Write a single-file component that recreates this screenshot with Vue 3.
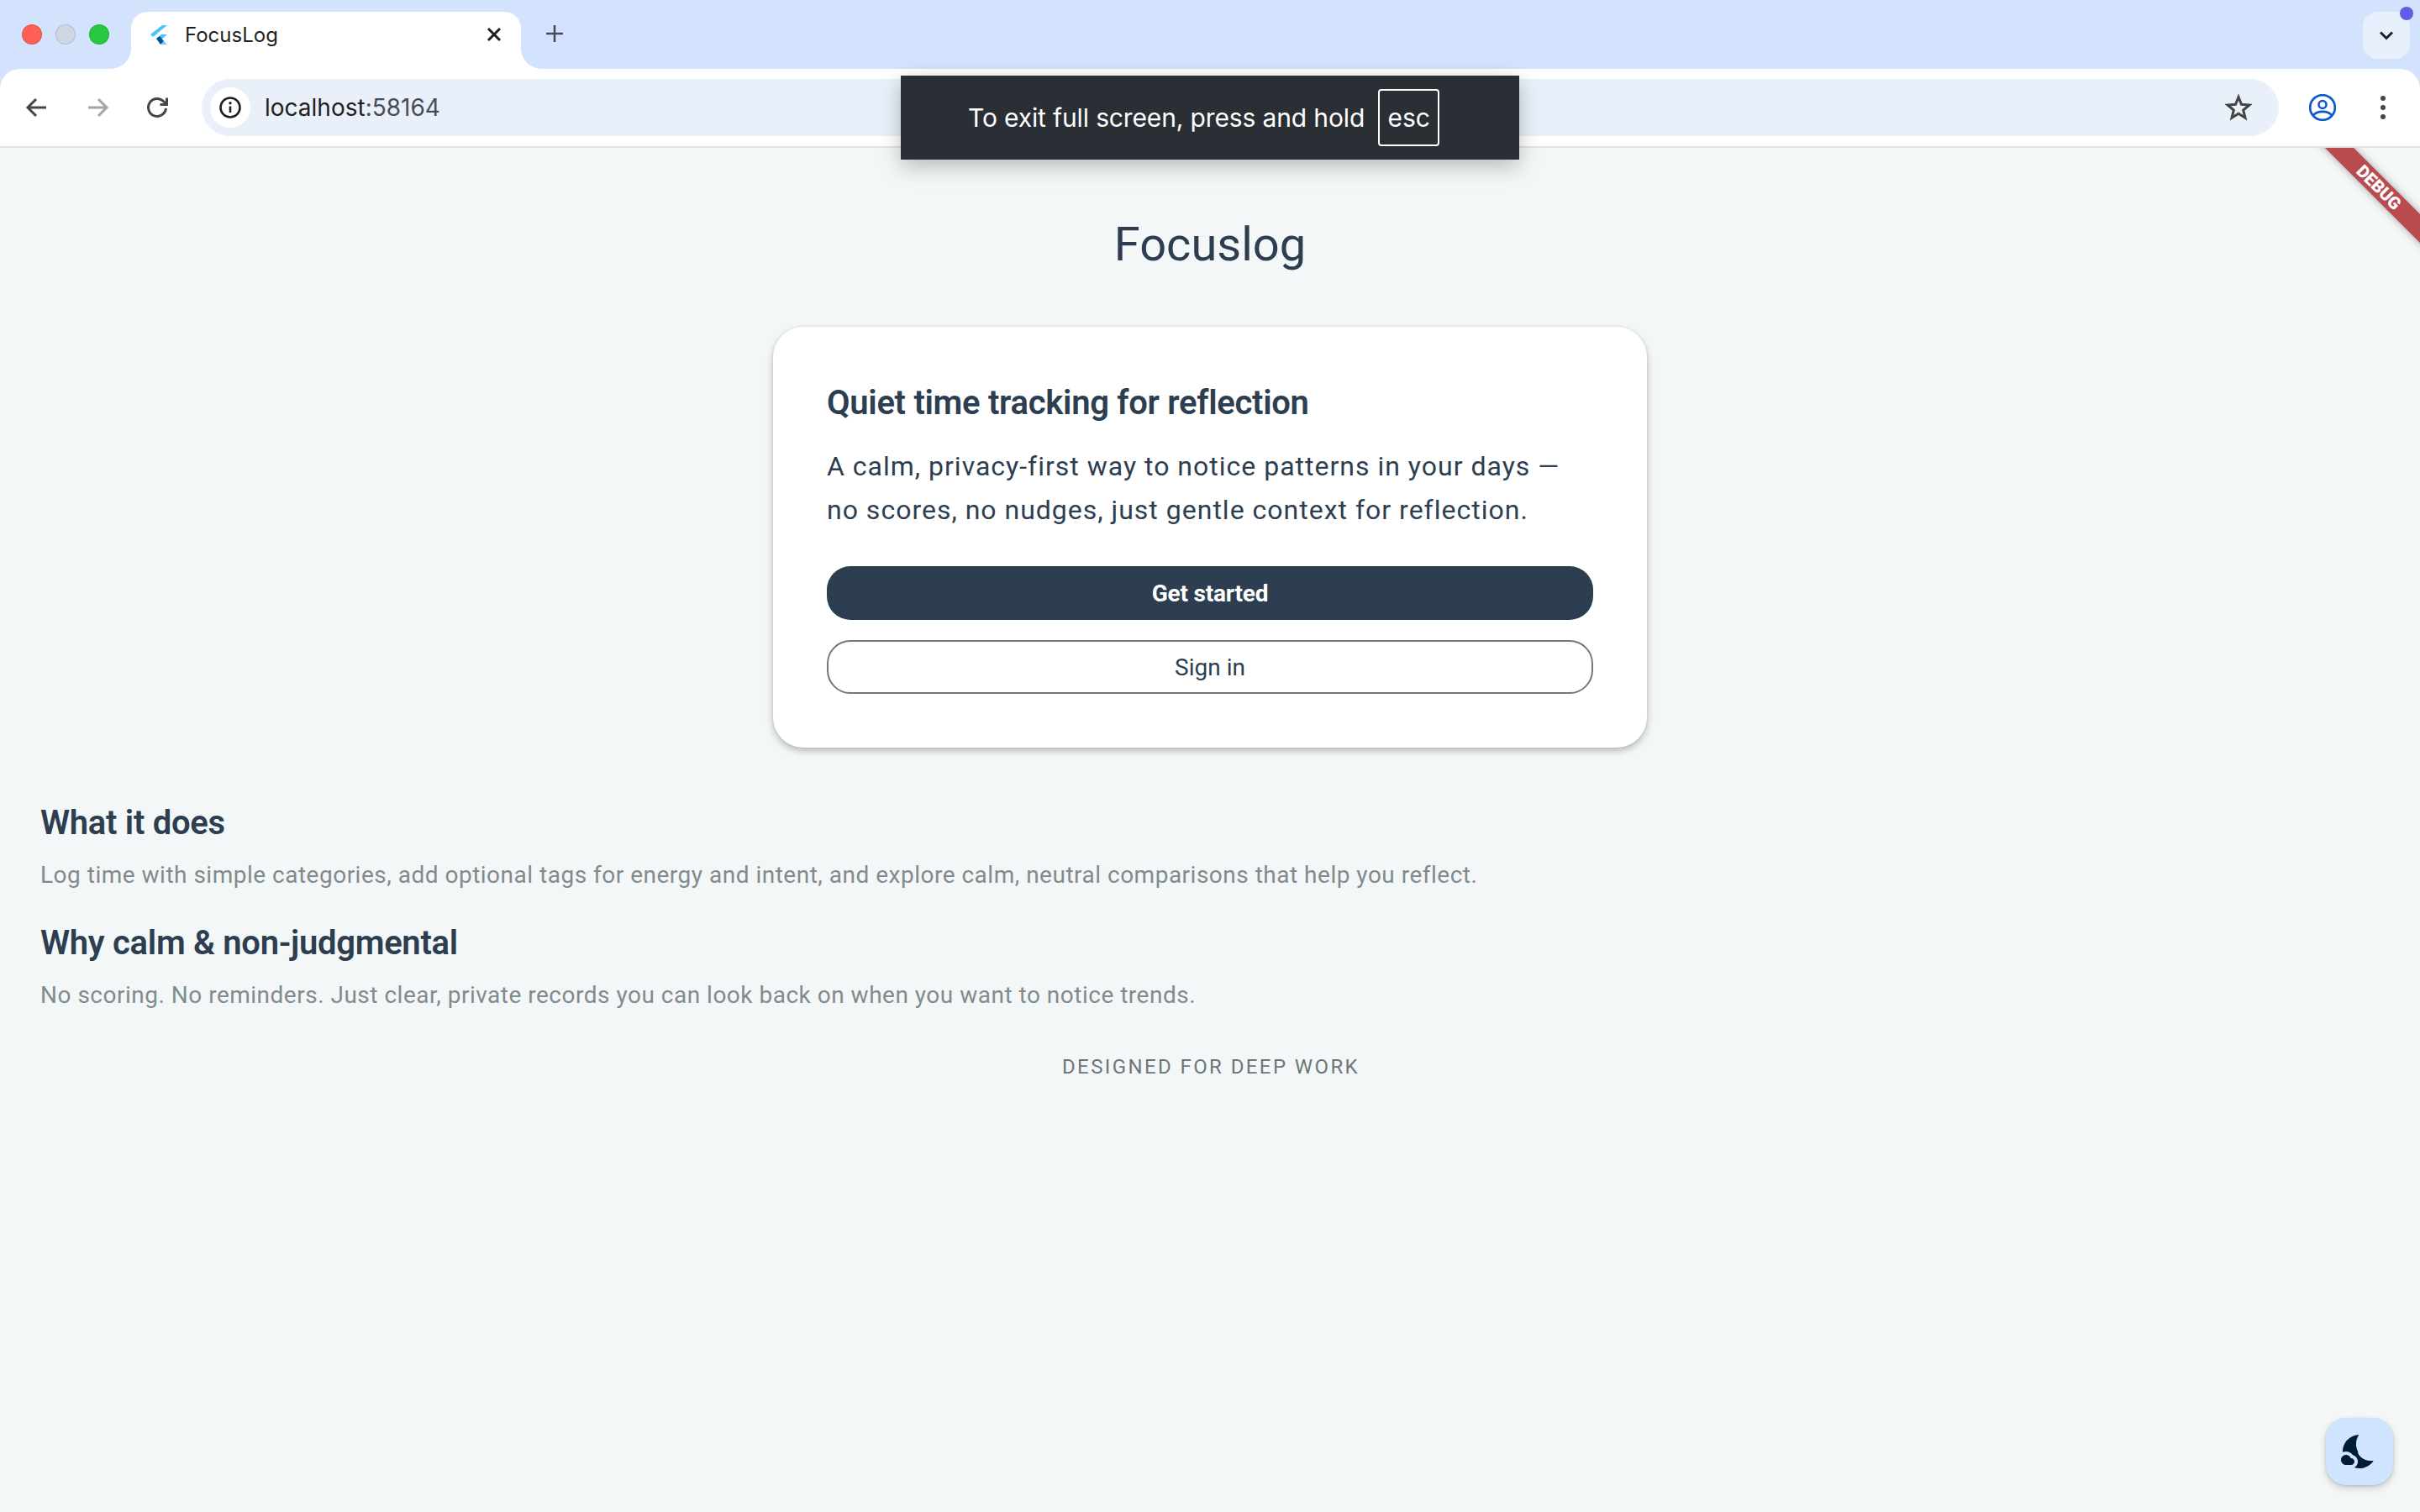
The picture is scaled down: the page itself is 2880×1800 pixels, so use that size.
<script setup>
const sections = [
  {
    title: 'What it does',
    text: 'Log time with simple categories, add optional tags for energy and intent, and explore calm, neutral comparisons that help you reflect.'
  },
  {
    title: 'Why calm & non-judgmental',
    text: 'No scoring. No reminders. Just clear, private records you can look back on when you want to notice trends.'
  }
];
</script>

<template>
  <div class="window">
    <header class="chrome">
      <div class="tabstrip">
        <div class="lights">
          <span class="light red"></span>
          <span class="light grey"></span>
          <span class="light green"></span>
        </div>
        <div class="tab">
          <svg class="favicon" viewBox="0 0 24 24">
            <polygon points="15,1 21,1 4,15 1,12" fill="#47c5fb" />
            <polygon points="14,12 21,12 12,20 8,17" fill="#47c5fb" />
            <polygon points="8,17 12,14 17,20 13,24" fill="#00569e" />
            <polygon points="13,24 17,20 21,24" fill="#00b5f8" opacity="0.6" />
          </svg>
          <span class="tab-title">FocusLog</span>
          <svg class="tab-close" viewBox="0 0 24 24">
            <path d="M5 5 19 19M19 5 5 19" />
          </svg>
        </div>
        <svg class="new-tab" viewBox="0 0 24 24">
          <path d="M12 2V22M2 12H22" />
        </svg>
        <div class="tab-menu">
          <svg viewBox="0 0 24 24">
            <path d="M5 8.500 12 15.500 19 8.500" />
          </svg>
          <span class="menu-dot"></span>
        </div>
      </div>

      <div class="toolbar">
        <svg class="nav-icon" viewBox="0 0 32 32">
          <path d="M27 16H6M15 6 5 16 15 26" stroke="#474747" />
        </svg>
        <svg class="nav-icon" viewBox="0 0 32 32">
          <path d="M5 16H26M17 6 27 16 17 26" stroke="#a6a6a6" />
        </svg>
        <svg class="nav-icon" viewBox="0 0 32 32">
          <path d="M25.500 17A10.500 10.500 0 1 1 22.500 8.500L26 12" stroke="#474747" />
          <path d="M26.500 4.500V12.500H18.500" stroke="#474747" />
        </svg>
        <div class="omnibox">
          <div class="site-info">
            <svg viewBox="0 0 28 28">
              <circle cx="14" cy="14" r="11.500" fill="none" stroke="#1f1f1f" stroke-width="2.600" />
              <path d="M14 12.500V20" stroke="#1f1f1f" stroke-width="2.600" />
              <circle cx="14" cy="8.800" r="1.700" fill="#1f1f1f" />
            </svg>
          </div>
          <span class="url">localhost<span class="port">:58164</span></span>
          <svg class="star" viewBox="0 0 32 32">
            <path d="M16 3.500 19.500 12.300 29 13 21.700 19 24 28.300 16 23.200 8 28.300 10.300 19 3 13 12.500 12.300Z" />
          </svg>
        </div>
        <svg class="profile" viewBox="0 0 32 32">
          <circle cx="16" cy="16" r="14.800" />
          <circle cx="16" cy="12.500" r="4.500" />
          <path d="M5.500 25C9 19.500 23 19.500 26.500 25" />
        </svg>
        <div class="kebab">
          <span></span>
          <span></span>
          <span></span>
        </div>
      </div>
    </header>

    <main class="page">
      <h1 class="brand">Focuslog</h1>

      <section class="card">
        <h2 class="heading">Quiet time tracking for reflection</h2>
        <p class="lead">
          A calm, privacy-first way to notice patterns in your days —<br />
          no scores, no nudges, just gentle context for reflection.
        </p>
        <button class="btn primary">Get started</button>
        <button class="btn outline">Sign in</button>
      </section>

      <div class="about">
        <div v-for="s in sections" :key="s.title" class="about-item">
          <h2 class="heading">{{ s.title }}</h2>
          <p class="muted">{{ s.text }}</p>
        </div>
      </div>

      <p class="tagline">DESIGNED FOR DEEP WORK</p>

      <div class="debug-banner">DEBUG</div>

      <button class="theme-toggle">
        <svg viewBox="0 0 24 24">
          <path d="M11.100 12.080c-2.330-4.510-.5-8.480.53-10.070C6.270 2.200 1.980 6.590 1.980 12c0 .14.02.28.02.42.62-.27 1.290-.42 2-.42 1.660 0 3.180.83 4.100 2.150 1.670.48 2.900 2.020 2.900 3.850 0 1.520-.87 2.830-2.120 3.510.98.32 2.030.5 3.110.5 3.500 0 6.580-1.800 8.370-4.520-2.360.23-6.980-.15-9.260-4.410z" />
          <path d="M7 16h-.18C6.400 14.840 5.300 14 4 14c-1.660 0-3 1.340-3 3s1.340 3 3 3h3c1.100 0 2-.9 2-2s-.9-2-2-2z" />
        </svg>
      </button>
    </main>

    <div class="fullscreen-toast">
      <span>To exit full screen, press and hold</span>
      <kbd class="key">esc</kbd>
    </div>
  </div>
</template>

<style scoped>
.window {
  position: relative;
  display: flex;
  flex-direction: column;
  height: 1800px;
  overflow: hidden;
  font-family: Roboto, sans-serif;
  color: #2c3e50;
}

.chrome {
  background: #d3e3fd;
  font-family: Inter, sans-serif;
}

.tabstrip {
  display: flex;
  align-items: flex-start;
  height: 82px;
}

.lights {
  display: flex;
  gap: 16px;
  width: 156px;
  padding: 29px 0 0 26px;
  box-sizing: border-box;
}

.light {
  width: 24px;
  height: 24px;
  border-radius: 50%;
  box-sizing: border-box;
  border: 1px solid rgba(0, 0, 0, 0.12);
}

.red { background: #ff5f57; }
.grey { background: #ced6e1; }
.green { background: #28c840; }

.tab {
  position: relative;
  display: flex;
  align-items: center;
  width: 464px;
  height: 68px;
  margin-top: 14px;
  padding: 0 20px 14px 22px;
  box-sizing: border-box;
  background: #fff;
  border-radius: 20px 20px 0 0;
}

.tab::before,
.tab::after {
  content: "";
  position: absolute;
  bottom: 0;
  width: 24px;
  height: 24px;
}

.tab::before {
  left: -24px;
  background: radial-gradient(circle at 0 0, transparent 23.500px, #fff 24px);
}

.tab::after {
  right: -24px;
  background: radial-gradient(circle at 100% 0, transparent 23.500px, #fff 24px);
}

.favicon {
  width: 24px;
  height: 24px;
  flex-shrink: 0;
}

.tab-title {
  flex: 1;
  margin-left: 18px;
  font-size: 24px;
  color: #1f1f1f;
}

.tab-close {
  width: 24px;
  height: 24px;
  fill: none;
  stroke: #1f1f1f;
  stroke-width: 3;
}

.new-tab {
  width: 24px;
  height: 24px;
  margin: 28px 0 0 28px;
  fill: none;
  stroke: #474c57;
  stroke-width: 2.600;
}

.tab-menu {
  position: relative;
  display: flex;
  align-items: center;
  justify-content: center;
  width: 56px;
  height: 56px;
  margin: 14px 12px 0 auto;
  background: #e9f0fd;
  border-radius: 18px;
}

.tab-menu svg {
  width: 24px;
  height: 24px;
  fill: none;
  stroke: #1f1f1f;
  stroke-width: 3;
}

.menu-dot {
  position: absolute;
  top: -6px;
  right: -4px;
  width: 16px;
  height: 16px;
  border-radius: 50%;
  background: #5f5ce6;
}

.toolbar {
  display: flex;
  align-items: center;
  height: 92px;
  padding: 0 38px 0 28px;
  box-sizing: content-box;
  background: #fff;
  border-radius: 24px 24px 0 0;
  border-bottom: 2px solid #e1e4e3;
}

.nav-icon {
  width: 32px;
  height: 32px;
  margin-right: 40px;
  fill: none;
  stroke-width: 3;
}

.nav-icon:nth-child(3) {
  margin-right: 36px;
}

.omnibox {
  display: flex;
  align-items: center;
  flex: 1;
  height: 68px;
  padding: 0 32px 0 10px;
  background: #e9f0f9;
  border-radius: 34px;
}

.site-info {
  display: flex;
  align-items: center;
  justify-content: center;
  width: 48px;
  height: 48px;
  background: #fff;
  border-radius: 50%;
}

.site-info svg {
  width: 28px;
  height: 28px;
}

.url {
  flex: 1;
  margin-left: 17px;
  font-size: 28px;
  color: #1f1f1f;
}

.port {
  color: #474c57;
}

.star {
  width: 32px;
  height: 32px;
  fill: none;
  stroke: #444;
  stroke-width: 3;
}

.profile {
  width: 32px;
  height: 32px;
  margin-left: 36px;
  fill: none;
  stroke: #0b57d0;
  stroke-width: 2.600;
}

.kebab {
  display: flex;
  flex-direction: column;
  align-items: center;
  gap: 5px;
  width: 12px;
  margin-left: 50px;
}

.kebab span {
  width: 6px;
  height: 6px;
  border-radius: 50%;
  background: #474747;
}

.page {
  position: relative;
  flex: 1;
  overflow: hidden;
  display: flex;
  flex-direction: column;
  align-items: center;
  padding-top: 83px;
  background: #f4f7f8;
}

.brand {
  margin: 0 0 66px;
  font-size: 56px;
  font-weight: 400;
  line-height: 64px;
  color: #2c3e50;
}

.card {
  display: flex;
  flex-direction: column;
  padding: 65px 64px 64px;
  box-sizing: content-box;
  width: 912px;
  background: #fff;
  border-radius: 36px;
  box-shadow: 0 4px 8px rgba(0, 0, 0, 0.25), 0 0 3px rgba(0, 0, 0, 0.08);
}

.heading {
  margin: 0;
  font-size: 40px;
  font-weight: 600;
  line-height: 52px;
  letter-spacing: -0.3px;
  color: #2c3e50;
}

.lead {
  margin: 23px 0 41px;
  font-size: 32px;
  line-height: 52px;
  letter-spacing: 1px;
  color: #2c3e50;
}

.btn {
  height: 64px;
  padding: 0;
  border-radius: 28px;
  font-family: Roboto, sans-serif;
  font-size: 28px;
}

.primary {
  border: 0;
  background: #2c3e50;
  color: #fff;
  font-weight: 700;
  letter-spacing: -0.2px;
}

.outline {
  margin-top: 24px;
  background: #fff;
  border: 2px solid #79747e;
  color: #2c3e50;
  font-weight: 400;
}

.about {
  align-self: stretch;
  display: flex;
  flex-direction: column;
  gap: 37px;
  margin-top: 64px;
  padding: 0 48px;
}

.muted {
  margin: 18px 0 0;
  font-size: 28px;
  line-height: 36px;
  letter-spacing: 0.5px;
  color: #7f8c8d;
}

.tagline {
  margin: 51px 0 0;
  padding-left: 2px;
  font-size: 24px;
  line-height: 32px;
  letter-spacing: 2.400px;
  color: #6d7778;
}

.debug-banner {
  position: absolute;
  top: 35px;
  right: -101px;
  width: 300px;
  height: 24px;
  transform: rotate(45deg);
  background: #b84a50;
  box-shadow: 0 0 10px rgba(0, 0, 0, 0.35);
  font-size: 20.400px;
  font-weight: 900;
  line-height: 24px;
  text-align: center;
  color: #fff;
}

.theme-toggle {
  position: absolute;
  right: 32px;
  bottom: 32px;
  display: flex;
  align-items: center;
  justify-content: center;
  width: 80px;
  height: 80px;
  padding: 0;
  border: 0;
  border-radius: 24px;
  background: #d0e4ff;
  box-shadow: 0 4px 8px rgba(0, 0, 0, 0.16), 0 1px 3px rgba(0, 0, 0, 0.14);
}

.theme-toggle svg {
  width: 48px;
  height: 48px;
  fill: #001d36;
}

.fullscreen-toast {
  position: absolute;
  top: 90px;
  left: 1072px;
  display: flex;
  align-items: center;
  gap: 16px;
  width: 736px;
  height: 100px;
  padding-left: 80px;
  box-sizing: border-box;
  background: #2a2e35;
  box-shadow: 0 8px 24px rgba(0, 0, 0, 0.25);
  font-family: Inter, sans-serif;
  font-size: 30px;
  letter-spacing: -0.14px;
  color: #fff;
}

.key {
  display: flex;
  align-items: center;
  justify-content: center;
  width: 73px;
  height: 68px;
  box-sizing: border-box;
  border: 2px solid #fff;
  border-radius: 4px;
  font-family: Inter, sans-serif;
  font-size: 30px;
}
</style>

<style>
html, body {
  margin: 0;
  background: #f4f7f8;
}
</style>
